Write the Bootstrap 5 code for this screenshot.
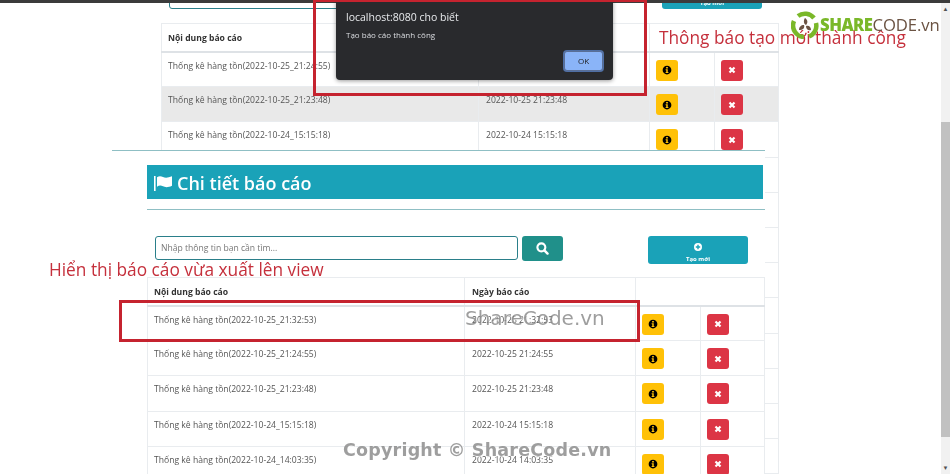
<!DOCTYPE html>
<html>
<head>
  <title>Chi tiết báo cáo</title>
  <meta charset="UTF-8">
  <link href="https://cdn.jsdelivr.net/npm/bootstrap@5.3.0/dist/css/bootstrap.min.css" rel="stylesheet">
  <style>
    html, body { height: 474px; overflow: hidden; }
    body { font-family: "Open Sans", "Liberation Sans", sans-serif; font-size: 8.6px; color: #555; background: #fff; filter: blur(.35px); }
    .top-strip { height: 3px; background: #3b3b3b; }
    .page-area { height: 471px; overflow: hidden; }
    .fake-scroll { width: 9px; background: #f1f1f1; }
    .fake-scroll .arrow { height: 12px; color: #505050; font-size: 6px; line-height: 12px; text-align: center; }
    .fake-scroll .gap-top { height: 107px; }
    .fake-scroll .thumb { height: 315px; background: #c1c1c1; }
    .fake-scroll .gap-end { height: 25px; }

    .back-view { padding-left: 161px; width: 778px; }
    .back-tools { height: 20px; position: relative; }
    .back-cut { height: 6px; overflow: hidden; display: flex; align-items: flex-end; }
    .back-input { width: 349px; margin-left: 8px; height: 24px; border: 1px solid #2a7f8a; border-radius: 3px; }
    .back-create { position: absolute; left: 501px; top: 0; width: 100px; height: 6px; background: #1aa2b8; border-radius: 0 0 3px 3px; color: #fff; font-size: 6px; font-weight: 700; line-height: 0; text-align: center; }

    .rep-table { table-layout: fixed; margin: 0; font-size: 8.6px; border-color: #e9ecef; --bs-table-color: #555; }
    .rep-table th { height: 28px; padding: 5px 6px 6px; line-height: 14px; color: #333; font-weight: 700; border-bottom: 2px solid #dee2e6; }
    .rep-table td { height: 35.2px; padding: 7px 6px 0; line-height: 13px; vertical-align: top; }
    .rep-table th:nth-child(2), .rep-table td:nth-child(2) { padding-left: 7px; }
    .rep-table tr.row-grey td { background: #e9e9e9; --bs-table-accent-bg: #e9e9e9; }
    .act-btn { width: 22px; height: 21px; padding: 0; display: flex; align-items: center; justify-content: center; border-radius: 3px; border: 0; }
    .back-table { width: 617px; }
    .back-table col.c1, .front-table col.c1 { width: 317px; }
    .back-table col.c2, .front-table col.c2 { width: 171px; }
    .back-table col.c3, .front-table col.c3 { width: 65px; }
    .back-table col.c4, .front-table col.c4 { width: 64px; }

    .front-view { position: absolute; left: 112px; top: 147px; width: 653px; height: 330px; background: #fff; border-top: 1px solid #8fbfc4; padding: 14px 0 0 35px; }
    .title-bar { height: 34px; width: 616px; background: #1aa2b8; color: #fff; font-size: 18px; font-weight: 600; padding-left: 7px; padding-top: 2px; gap: 5px; }
    .title-rule { margin: 10px 0 0; width: 618px; border-top: 1px solid #8fbfc4; opacity: 1; }
    .tools-row { margin-top: 26px; margin-left: 8px; height: 41px; }
    .search-box { width: 363px; height: 24px; font-size: 8.6px; padding: 0 5px; border: 1px solid #2a7f8a; border-radius: 3px; color: #555; }
    .search-box::placeholder { color: #777; }
    .search-btn { width: 41px; height: 25px; margin-left: 4px; padding: 0; background: #20908a; border: 0; border-radius: 3px; color: #fff; }
    .create-btn { width: 100px; height: 28px; margin-left: 85px; padding: 7px 0 0; background: #1aa2b8; border: 0; border-radius: 3px; color: #fff; font-size: 6px; font-weight: 700; line-height: 9px; }
    .front-table { width: 617px; }

    .alert-box { position: absolute; left: 336px; top: 0; width: 277px; height: 80px; background: #292a2d; border-radius: 0 0 4px 4px; box-shadow: 0 1px 4px rgba(0,0,0,.4); color: #e8eaed; padding: 10px 10px; }
    .alert-host { font-size: 10.5px; line-height: 14px; }
    .alert-msg { font-size: 8px; line-height: 12px; margin-top: 5px; color: #dadce0; }
    .alert-ok { position: absolute; right: 10px; bottom: 9px; width: 39px; height: 20px; padding: 0; background: #8ab4f8; border: 1px solid #5a6f96; box-shadow: 0 0 0 1px #4f6fa5; border-radius: 3px; color: #202124; font-size: 8px; }

    .red-frame { position: absolute; border: 3px solid #c5232f; }
    .frame-alert { left: 313px; top: -1px; width: 334px; height: 97px; }
    .frame-row { left: 119px; top: 300px; width: 521px; height: 42px; }
    .note-text { position: absolute; color: #c5303c; font-size: 17.3px; line-height: 22px; white-space: nowrap; }
    .note-alert { left: 659px; top: 27px; }
    .note-view { left: 49px; top: 259px; }
    .wm-text { position: absolute; font-family: "DejaVu Sans", sans-serif; color: rgba(125,125,125,.75); text-shadow: 1px 1px 1px rgba(255,255,255,.8); white-space: nowrap; }
    .wm-mid { left: 465px; top: 305px; font-size: 20px; line-height: 26px; }
    .wm-copy { left: 343px; top: 437px; font-size: 17.5px; line-height: 26px; font-weight: 700; letter-spacing: .2px; }
    .site-logo { position: absolute; left: 791px; top: 11px; gap: 1px; }
    .logo-name { font-size: 16.7px; line-height: 26px; letter-spacing: -.1px; color: #6b5343; white-space: nowrap; }
    .logo-name b { color: #7ab829; font-weight: 800; letter-spacing: -.5px; }
  </style>
</head>
<body>

<svg width="0" height="0" class="position-absolute">
  <symbol id="ic-info" viewBox="0 0 16 16"><path fill="currentColor" fill-rule="evenodd" d="M8 1a7 7 0 1 1 0 14A7 7 0 0 1 8 1zM6.600 3.200v2.400h2.800V3.200zM5.800 6.800v1.600h1v2.600h-1v1.600h4.400V11h-1V6.800z"/></symbol>
  <symbol id="ic-times" viewBox="0 0 16 16"><path stroke="currentColor" stroke-width="4.400" d="M3 3l10 10M13 3L3 13"/></symbol>
  <symbol id="ic-search" viewBox="0 0 16 16"><circle cx="6.600" cy="6.600" r="4.900" fill="none" stroke="currentColor" stroke-width="2.600"/><path stroke="currentColor" stroke-width="3" stroke-linecap="round" d="M10.600 10.600l3.600 3.600"/></symbol>
  <symbol id="ic-plus" viewBox="0 0 16 16"><path fill="currentColor" fill-rule="evenodd" d="M8 0a8 8 0 1 1 0 16A8 8 0 0 1 8 0zM6.600 3.600v3H3.600v2.800h3v3h2.800v-3h3V6.600h-3v-3z"/></symbol>
  <symbol id="ic-flag" viewBox="0 0 18 16"><path fill="currentColor" d="M0 1h1.600v15H0zM3 2.200C5 .8 7 1 9 2s5 1 9-.7v9.400c-4 2-7 1.600-9 .6s-4-1-6 .4z"/></symbol>
</svg>

<div class="top-strip"></div>
<div class="page-area d-flex">
  <div class="flex-grow-1 position-relative">
    <div class="back-view">
      <div class="back-tools">
        <div class="back-cut"><div class="back-input"></div></div>
        <div class="back-create">Tạo mới</div>
      </div>
      <table class="table table-bordered rep-table back-table">
        <colgroup><col class="c1"><col class="c2"><col class="c3"><col class="c4"></colgroup>
        <thead><tr><th>Nội dung báo cáo</th><th>Ngày báo cáo</th><th colspan="2"></th></tr></thead>
        <tbody id="backRows"></tbody>
      </table>
    </div>

    <div class="front-view">
      <div class="title-bar d-flex align-items-center">
        <svg width="18" height="16"><use href="#ic-flag"/></svg>
        <span>Chi tiết báo cáo</span>
      </div>
      <hr class="title-rule">
      <div class="tools-row d-flex align-items-start">
        <input class="form-control search-box" placeholder="Nhập thông tin bạn cần tìm...">
        <button class="btn search-btn d-flex align-items-center justify-content-center"><svg width="13" height="13"><use href="#ic-search"/></svg></button>
        <button class="btn create-btn d-flex flex-column align-items-center gap-1"><svg width="8" height="8"><use href="#ic-plus"/></svg><span>Tạo mới</span></button>
      </div>
      <table class="table table-bordered rep-table front-table">
        <colgroup><col class="c1"><col class="c2"><col class="c3"><col class="c4"></colgroup>
        <thead><tr><th>Nội dung báo cáo</th><th>Ngày báo cáo</th><th colspan="2"></th></tr></thead>
        <tbody id="frontRows"></tbody>
      </table>
    </div>
  </div>
  <div class="fake-scroll flex-shrink-0">
    <div class="arrow">▲</div>
    <div class="gap-top"></div>
    <div class="thumb"></div>
    <div class="gap-end"></div>
    <div class="arrow">▼</div>
  </div>
</div>

<!-- cac lop chu thich nam tren anh -->
<div class="alert-box">
  <div class="alert-host">localhost:8080 cho biết</div>
  <div class="alert-msg">Tạo báo cáo thành công</div>
  <button class="btn alert-ok">OK</button>
</div>
<div class="red-frame frame-alert"></div>
<div class="red-frame frame-row"></div>
<div class="note-text note-alert">Thông báo tạo mới thành công</div>
<div class="note-text note-view">Hiển thị báo cáo vừa xuất lên view</div>
<div class="wm-text wm-mid">ShareCode.vn</div>
<div class="wm-text wm-copy">Copyright © ShareCode.vn</div>

<div class="site-logo d-flex align-items-center">
  <svg width="28" height="28" viewBox="0 0 28 28">
    <path fill="none" stroke="#7ab829" stroke-width="4.500" d="M7 5a11.500 11.500 0 0 1 16 2M25 12a11.500 11.500 0 0 1-7 13.500M13 26A11.500 11.500 0 0 1 3 10"/>
    <path fill="#6b5343" d="M14 7c3 2 3 5 1 7-2-1-3-4-1-7zM8 19c0-3 2-5 5-5 1 3-1 5-5 5zM20 19c-3 1-5-1-5-4 3-1 5 1 5 4z"/>
  </svg>
  <div class="logo-name"><b>SHARE</b>CODE.vn</div>
</div>

<script>
  const backData = ["2022-10-25_21:24:55", "2022-10-25_21:23:48", "2022-10-24_15:15:18", "2022-10-24_14:03:35",
    "2022-10-24_14:03:35", "2022-10-24_14:03:35", "2022-10-24_14:03:35", "2022-10-24_14:03:35", "2022-10-24_14:03:35", "2022-10-24_14:03:35", "2022-10-24_14:03:35", "2022-10-24_14:03:35"];
  const frontData = ["2022-10-25_21:32:53", "2022-10-25_21:24:55", "2022-10-25_21:23:48", "2022-10-24_15:15:18", "2022-10-24_14:03:35"];

  function rowHtml(stamp, grey) {
    return `
      <tr class="${grey ? "row-grey" : ""}">
        <td>Thống kê hàng tồn(${stamp})</td>
        <td>${stamp.replace("_", " ")}</td>
        <td><button class="btn btn-warning act-btn"><svg width="10" height="10"><use href="#ic-info"/></svg></button></td>
        <td><button class="btn btn-danger act-btn"><svg width="8" height="8"><use href="#ic-times"/></svg></button></td>
      </tr>`;
  }
  document.getElementById("backRows").innerHTML = backData.map((s, i) => rowHtml(s, i === 1)).join("");
  document.getElementById("frontRows").innerHTML = frontData.map(s => rowHtml(s, false)).join("");
</script>
<script src="https://cdn.jsdelivr.net/npm/bootstrap@5.3.0/dist/js/bootstrap.bundle.min.js"></script>
</body>
</html>
